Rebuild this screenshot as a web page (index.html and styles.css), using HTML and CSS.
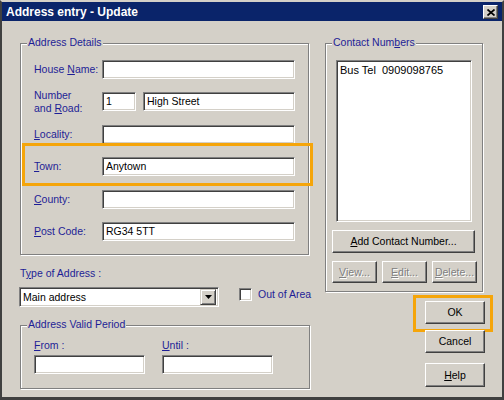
FILE: index.html
```html
<!DOCTYPE html>
<html>
<head>
<meta charset="utf-8">
<link rel="stylesheet" href="styles.css">
</head>
<body>
<div class="window">
  <div class="titlebar">
    <span class="title">Address entry - Update</span>
    <span class="close"><svg width="8" height="7" viewBox="0 0 8 7"><path d="M0.5 0.5 L7.5 6.5 M7.5 0.5 L0.5 6.5" stroke="#000" stroke-width="1.7" fill="none"/></svg></span>
  </div>
  <div class="content">
    <div class="left">
      <div class="group address">
        <span class="legend">Address Details</span>
        <div class="rows">
          <div class="field-row"><span class="label">House <u>N</u>ame:</span><span class="input w193"></span></div>
          <div class="field-row"><span class="label">Number<br>and <u>R</u>oad:</span><span class="input w34">1</span><span class="input w152 gap7">High Street</span></div>
          <div class="field-row"><span class="label"><u>L</u>ocality:</span><span class="input w193"></span></div>
          <div class="field-row town"><span class="label"><u>T</u>own:</span><span class="input w193">Anytown</span><span class="highlight hl-town"></span></div>
          <div class="field-row"><span class="label"><u>C</u>ounty:</span><span class="input w193"></span></div>
          <div class="field-row"><span class="label"><u>P</u>ost Code:</span><span class="input w193">RG34 5TT</span></div>
        </div>
      </div>
      <div class="type-label">T<u>y</u>pe of Address :</div>
      <div class="type-row">
        <div class="select"><span class="select-text">Main address</span><span class="select-btn"><svg width="7" height="4" viewBox="0 0 7 4"><polygon points="0,0 7,0 3.5,4" fill="#000"/></svg></span></div>
        <span class="checkbox"></span>
        <span class="check-label">Out of Area</span>
      </div>
      <div class="group period">
        <span class="legend">Address Valid Period</span>
        <div class="period-cols">
          <div class="period-col"><span class="label-top"><u>F</u>rom :</span><span class="input w111"></span></div>
          <div class="period-col"><span class="label-top"><u>U</u>ntil :</span><span class="input w111"></span></div>
        </div>
      </div>
    </div>
    <div class="right">
      <div class="group contact">
        <span class="legend">Contact Num<u>b</u>ers</span>
        <div class="listbox">Bus Tel  0909098765</div>
        <div class="btn add"><u>A</u>dd Contact Number...</div>
        <div class="btn-row">
          <div class="btn small disabled"><u>V</u>iew...</div>
          <div class="btn small disabled"><u>E</u>dit...</div>
          <div class="btn small disabled"><u>D</u>elete...</div>
        </div>
      </div>
      <div class="btn dlg ok">OK<span class="highlight hl-ok"></span></div>
      <div class="btn dlg cancel">Cancel</div>
      <div class="btn dlg help"><u>H</u>elp</div>
    </div>
  </div>
</div>
</body>
</html>
```
FILE: styles.css
```css
* { box-sizing: border-box; }
html, body { margin: 0; padding: 0; }
body {
  width: 504px;
  height: 400px;
  overflow: hidden;
  background: #d4d0c8;
  font-family: "Liberation Sans", Arial, sans-serif;
  font-size: 10.5px;
  color: #000;
}
u { text-decoration: underline; text-underline-offset: 1px; }

.window {
  width: 504px;
  height: 400px;
  background: #d4d0c8;
  border-style: solid;
  border-width: 2px 2px 3px 2px;
  border-color: #d4d0c8 #404040 #404040 #404040;
  display: flex;
  flex-direction: column;
}
.titlebar {
  flex: none;
  height: 19px;
  background: #0a246a;
  display: flex;
  align-items: center;
  justify-content: space-between;
  padding: 0 4px 0 4px;
}
.title {
  color: #fff;
  font-weight: bold;
  font-size: 12px;
  line-height: 14px;
}
.close {
  width: 15px;
  height: 14px;
  margin-top: 1px;
  background: #d4d0c8;
  border: 1px solid;
  border-color: #fff #404040 #404040 #fff;
  box-shadow: inset -1px -1px 0 #808080;
  display: flex;
  align-items: center;
  justify-content: center;
}
.close svg { display: block; }

.content {
  display: flex;
  gap: 15px;
  padding: 22px 0 0 18px;
}
.left {
  width: 290px;
  display: flex;
  flex-direction: column;
  align-items: flex-start;
}
.right {
  width: 160px;
  display: flex;
  flex-direction: column;
  align-items: flex-start;
}

.group {
  position: relative;
  border: 1px solid #808080;
  box-shadow: 1px 1px 0 #fff, inset 1px 1px 0 #fff;
}
.legend {
  position: absolute;
  top: -8px;
  left: 6px;
  padding: 0 1px;
  background: #d4d0c8;
  color: #1e1e96;
  line-height: 13px;
  white-space: nowrap;
}

.address {
  width: 289px;
  height: 212px;
  padding: 16px 0 0 13px;
}
.rows {
  width: 261px;
  display: flex;
  flex-direction: column;
  gap: 13.4px;
}
.field-row {
  position: relative;
  display: flex;
  align-items: center;
  height: 19px;
}
.label {
  width: 68px;
  flex: none;
  color: #1e1e96;
  line-height: 13px;
}
.input {
  flex: none;
  height: 19px;
  background: #fff;
  border: 1px solid;
  border-color: #808080 #fff #fff #808080;
  box-shadow: inset 1px 1px 0 #404040, inset -1px -1px 0 #d4d0c8;
  padding: 0 2px 0 3px;
  line-height: 17px;
  white-space: nowrap;
  color: #000;
}
.w193 { width: 193px; }
.w34 { width: 34px; }
.w152 { width: 152px; }
.w111 { width: 111px; }
.gap7 { margin-left: 7px; }

.highlight {
  position: absolute;
  border: 3px solid #f5a50a;
  pointer-events: none;
}
.hl-town { top: -14px; left: -12px; right: -18px; bottom: -10px; }
.hl-ok { top: -7px; left: -13px; right: -9px; bottom: -9px; }

.type-label {
  margin-top: 12px;
  color: #1e1e96;
  line-height: 13px;
}
.type-row {
  display: flex;
  align-items: flex-start;
  margin-top: 7px;
}
.select {
  width: 200px;
  height: 20px;
  margin-left: -1px;
  display: flex;
  align-items: center;
  justify-content: space-between;
  background: #fff;
  border: 1px solid;
  border-color: #808080 #fff #fff #808080;
  box-shadow: inset 1px 1px 0 #404040, inset -1px -1px 0 #d4d0c8;
  padding: 1px 2px 1px 3px;
}
.select-text { line-height: 16px; }
.select-btn {
  width: 16px;
  height: 16px;
  background: #d4d0c8;
  border: 1px solid;
  border-color: #d4d0c8 #404040 #404040 #d4d0c8;
  box-shadow: inset 1px 1px 0 #fff, inset -1px -1px 0 #808080;
  display: flex;
  align-items: center;
  justify-content: center;
}
.select-btn svg { display: block; }
.checkbox {
  width: 13px;
  height: 13px;
  margin: 1px 0 0 20px;
  background: #fff;
  border: 1px solid;
  border-color: #808080 #fff #fff #808080;
  box-shadow: inset 1px 1px 0 #404040, inset -1px -1px 0 #d4d0c8;
}
.check-label {
  margin: 1px 0 0 6px;
  color: #1e1e96;
  line-height: 13px;
  white-space: nowrap;
}

.period {
  width: 290px;
  height: 64px;
  margin-top: 18px;
  padding: 13px 0 0 13px;
}
.period-cols {
  display: flex;
  gap: 17px;
}
.period-col {
  display: flex;
  flex-direction: column;
  gap: 3px;
}
.label-top {
  color: #1e1e96;
  line-height: 13px;
}

.contact {
  width: 158px;
  height: 249px;
  padding: 16px 0 0 10px;
}
.listbox {
  width: 136px;
  height: 162px;
  background: #fff;
  border: 1px solid;
  border-color: #808080 #fff #fff #808080;
  box-shadow: inset 1px 1px 0 #404040, inset -1px -1px 0 #d4d0c8;
  padding: 2px 3px;
  font-size: 11px;
  line-height: 14px;
  white-space: pre;
}

.btn {
  position: relative;
  display: flex;
  align-items: center;
  justify-content: center;
  background: #d4d0c8;
  border: 1px solid;
  border-color: #fff #404040 #404040 #fff;
  box-shadow: inset -1px -1px 0 #808080;
  color: #000;
  line-height: 13px;
  white-space: nowrap;
}
.add {
  width: 143px;
  height: 23px;
  margin: 8px 0 0 -4px;
}
.btn-row {
  display: flex;
  gap: 5px;
  margin: 8px 0 0 -4px;
}
.small {
  width: 45px;
  height: 22px;
}
.disabled {
  color: #808080;
  text-shadow: 1px 1px 0 #fff;
}
.dlg {
  align-self: flex-end;
  width: 60px;
  height: 23px;
}
.ok { margin-top: 9px; }
.cancel { margin-top: 6px; }
.help { margin-top: 10px; height: 24px; }
```
